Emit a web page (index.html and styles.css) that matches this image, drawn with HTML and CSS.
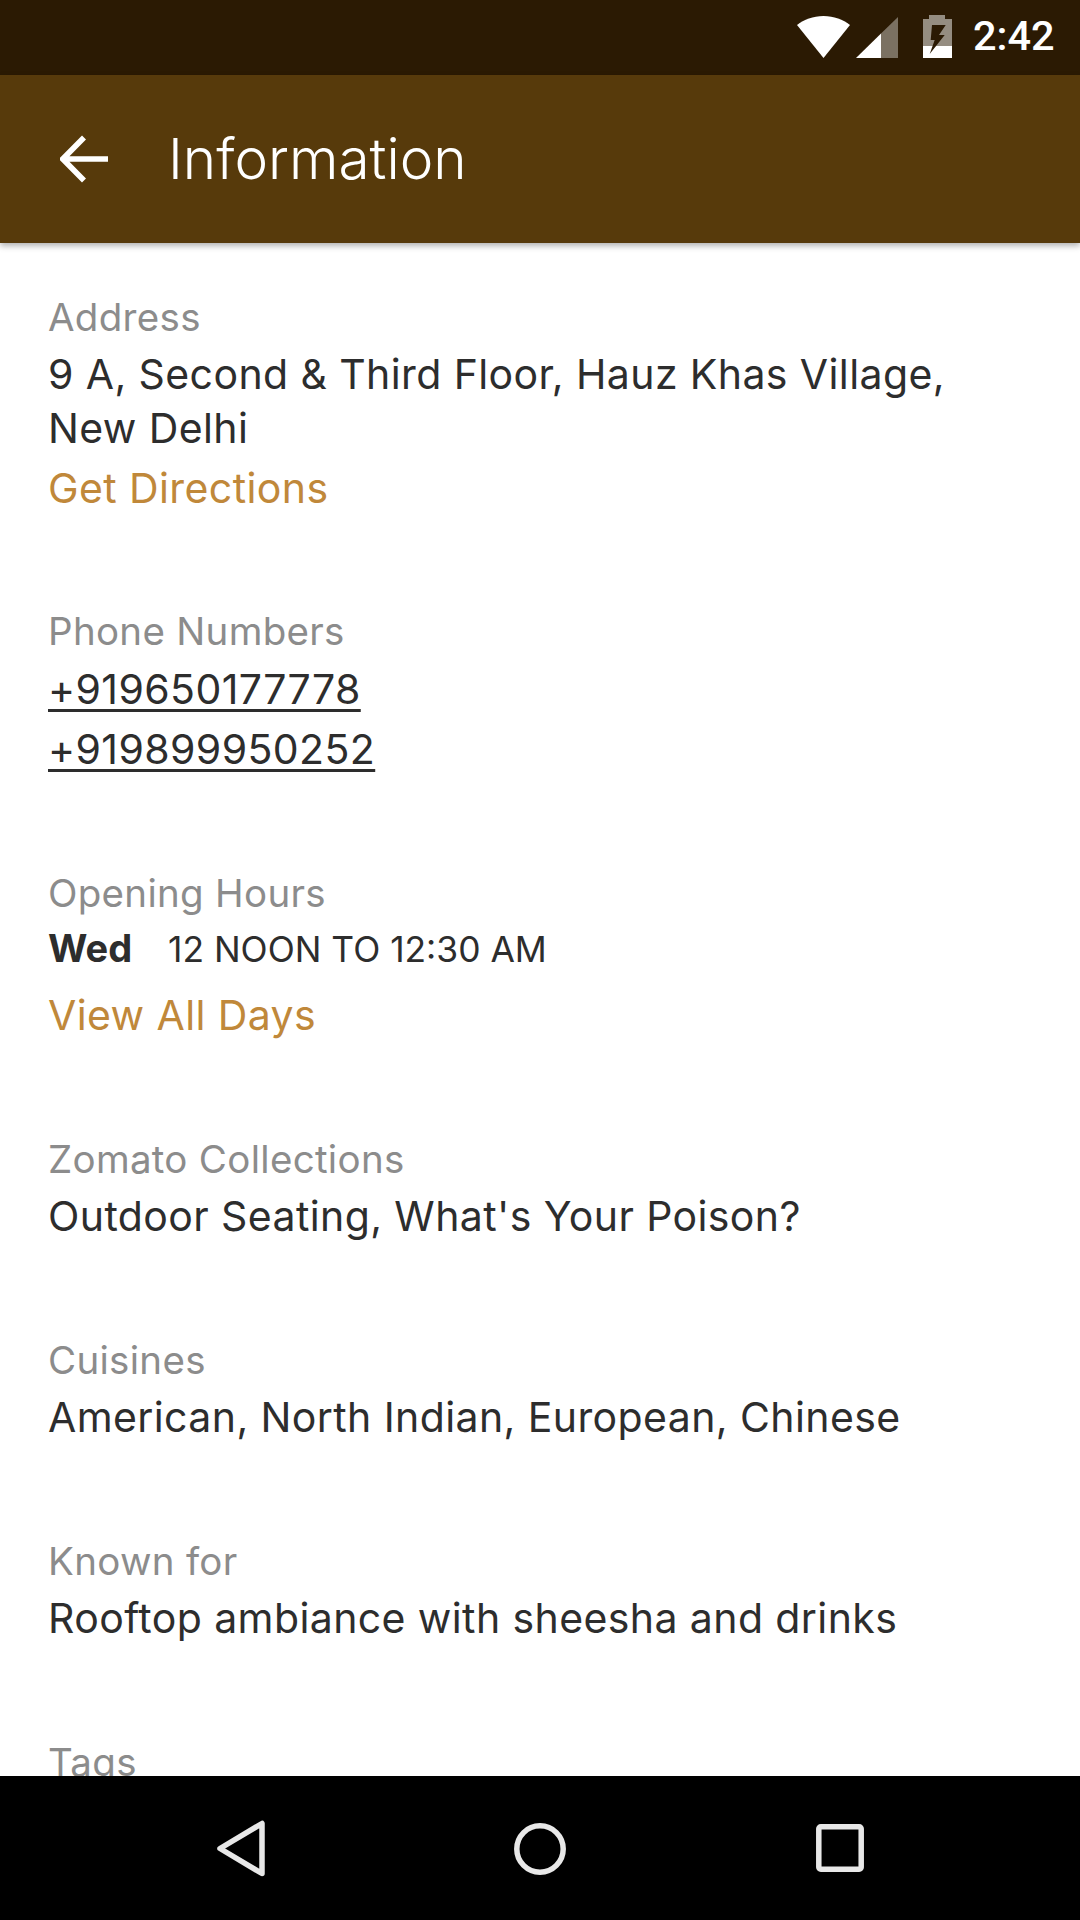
FILE: index.html
```html
<!DOCTYPE html>
<html lang="en">
<head>
<meta charset="utf-8">
<title>Information</title>
<link rel="stylesheet" href="styles.css">
</head>
<body>
<div class="screen">
  <div class="statusbar">
    <svg class="ic-wifi" width="53" height="42" viewBox="0 0 53 42"><path d="M26.500 42 0 9C7 3.500 16 0 26.500 0S46 3.500 53 9Z" fill="#fff"/></svg>
    <svg class="ic-signal" width="42" height="41" viewBox="0 0 42 41"><path d="M42 0V41H25V16.600Z" fill="#fff" fill-opacity=".38"/><path d="M25 16.600V41H0Z" fill="#fff"/></svg>
    <svg class="ic-battery" width="29" height="43" viewBox="0 0 29 43"><path d="M6 0H22V4H29V31H0V4H6Z" fill="#fff" fill-opacity=".5"/><path d="M0 31H29V43H0Z" fill="#fff"/><path d="M9 10H22.700L16 20H21.700L6.700 39 11.700 25H7.700Z" fill="#2b1a03"/></svg>
    <span class="clock">2:42</span>
  </div>
  <header class="toolbar">
    <svg class="ic-back" width="48" height="48" viewBox="0 0 48 48"><path d="M48 24H3M24 2.500 2.800 24 24 45.500" fill="none" stroke="#fff" stroke-width="5.600"/></svg>
    <h1 class="title">Information</h1>
  </header>
  <main class="content">
    <section class="block block-address">
      <div class="label">Address</div>
      <div class="value">9 A, Second &amp; Third Floor, Hauz Khas Village, New Delhi</div>
      <a class="link link-address">Get Directions</a>
    </section>
    <section class="block block-phones">
      <div class="label">Phone Numbers</div>
      <div class="phones">
        <a class="phone">+919650177778</a>
        <a class="phone">+919899950252</a>
      </div>
    </section>
    <section class="block">
      <div class="label">Opening Hours</div>
      <div class="hours"><span class="day">Wed</span><span class="time">12 NOON TO 12:30 AM</span></div>
      <a class="link link-days">View All Days</a>
    </section>
    <section class="block">
      <div class="label">Zomato Collections</div>
      <div class="value">Outdoor Seating, What's Your Poison?</div>
    </section>
    <section class="block">
      <div class="label">Cuisines</div>
      <div class="value">American, North Indian, European, Chinese</div>
    </section>
    <section class="block">
      <div class="label">Known for</div>
      <div class="value">Rooftop ambiance with sheesha and drinks</div>
    </section>
    <section class="block">
      <div class="label">Tags</div>
    </section>
  </main>
  <nav class="navbar">
    <svg class="nav-back" width="48" height="57" viewBox="0 0 48 57"><path d="M45 3.500V53.500L3 28.500Z" fill="none" stroke="#e8e8e8" stroke-width="5.500" stroke-linejoin="round"/></svg>
    <svg class="nav-home" width="52" height="52" viewBox="0 0 52 52"><circle cx="26" cy="26" r="23.200" fill="none" stroke="#e8e8e8" stroke-width="5.500"/></svg>
    <svg class="nav-recent" width="48" height="48" viewBox="0 0 48 48"><rect x="2.800" y="2.800" width="42.400" height="42.400" rx="2" fill="none" stroke="#e8e8e8" stroke-width="5.500"/></svg>
  </nav>
</div>
</body>
</html>
```
FILE: styles.css
```css
* { box-sizing: border-box; }
html, body { margin: 0; padding: 0; }
body { width: 1080px; height: 1920px; overflow: hidden; background: #fff; font-family: Inter, Lato, sans-serif; }
.screen { width: 1080px; height: 1920px; display: flex; flex-direction: column; overflow: hidden; }

.statusbar { flex: 0 0 75px; background: #2b1a03; display: flex; align-items: flex-start; padding: 15px 0 0 797px; }
.ic-wifi { margin-top: 1px; }
.ic-signal { margin: 2px 0 0 6px; }
.ic-battery { margin-left: 25px; }
.clock { margin: -5px 0 0 21px; font: 500 41.500px/52px Roboto, sans-serif; color: #fff; }

.toolbar { flex: 0 0 168px; background: #573a0b; display: flex; align-items: center; padding-left: 60px; box-shadow: 0 3px 6px rgba(0,0,0,.3); position: relative; z-index: 1; }
.title { margin: 0 0 0 60px; font-size: 56.700px; font-weight: 300; line-height: 64px; color: #fff; }

.content { flex: 1 1 0; overflow: hidden; padding: 51px 48px 0; color: #2d2d2d; font-size: 41px; letter-spacing: .4px; }
.block { margin-bottom: 94px; display: flex; flex-direction: column; align-items: flex-start; }
.label { font-size: 38.500px; letter-spacing: .3px; line-height: 46px; color: #8c8c8c; margin-bottom: 7px; }
.value { line-height: 54px; }
.link { line-height: 54px; color: #c0883a; }
.link-address { margin-top: 6px; }
.link-days { margin-top: 12.500px; }
.block-address { margin-bottom: 93px; }
.block-phones { margin-bottom: 91px; }
.phones { display: flex; flex-direction: column; align-items: flex-start; margin-top: -2px; }
.phone { line-height: 60px; text-decoration: underline; text-underline-offset: 5px; text-decoration-thickness: 3px; }
.hours { display: flex; align-items: baseline; line-height: 50px; }
.day { font-size: 38px; font-weight: 700; width: 120px; letter-spacing: 0; }
.time { font-size: 35.400px; letter-spacing: 0; }

.navbar { flex: 0 0 144px; background: #000; position: relative; z-index: 1; }
.nav-back { position: absolute; left: 217px; top: 44px; }
.nav-home { position: absolute; left: 514px; top: 47px; }
.nav-recent { position: absolute; left: 816px; top: 48px; }
```
